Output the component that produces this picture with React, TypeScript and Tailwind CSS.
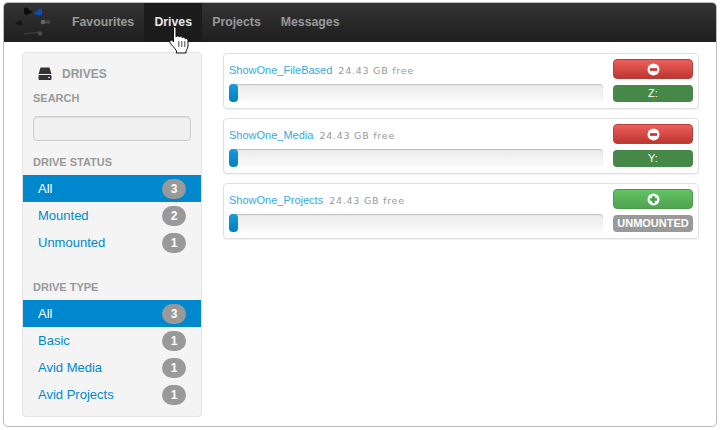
import React from "react";

function Row({ label, count, active }: { label: string; count: number; active?: boolean }) {
  return (
    <div className={`h-[27px] flex items-center justify-between pl-[15px] pr-[15px] text-[13px] ${active ? "bg-[#0088cf] text-white" : "text-[#0088cc]"}`}>
      <span>{label}</span>
      <span className="w-[24px] h-[20px] rounded-[10px] bg-[#999999] text-white text-[12px] font-bold flex items-center justify-center">{count}</span>
    </div>
  );
}

function Heading({ children, className }: { children: React.ReactNode; className: string }) {
  return <div className={`pl-[10px] text-[11px] leading-[14px] font-bold text-[#999999] ${className}`}>{children}</div>;
}

function Circle({ plus }: { plus?: boolean }) {
  const c = plus ? "#43a047" : "#c9302c";
  return (
    <svg width="13" height="13" viewBox="0 0 13 13">
      <circle cx="6.5" cy="6.5" r="6" fill="#fff" />
      <rect x="3" y="5.2" width="7" height="2.6" fill={c} />
      {plus && <rect x="5.2" y="3" width="2.6" height="7" fill={c} />}
    </svg>
  );
}

function Card({ name, free, mounted, letter }: { name: string; free: string; mounted: boolean; letter: string }) {
  return (
    <div className="h-[56px] bg-white border border-[#e0e0e0] rounded-[4px] shadow-[0_1px_1px_rgba(0,0,0,0.06)] flex pl-[5px] pr-[5px]">
      <div className="flex-1 min-w-0 pt-[7px]">
        <div className="h-[18px] flex items-baseline gap-[6px] leading-[18px]">
          <span className="text-[11px] text-[#36a9e1]">{name}</span>
          <span className="text-[9.5px] tracking-[0.75px] text-[#999999] font-['DejaVu_Sans',sans-serif]">{free}</span>
        </div>
        <div className="mt-[5px] h-[18px] w-[374px] rounded-[4px] bg-gradient-to-b from-[#ebebeb] to-[#fafafa] shadow-[inset_0_1px_1px_rgba(0,0,0,0.2)]">
          <div className="h-[18px] w-[9px] rounded-[4px] bg-gradient-to-b from-[#149bdf] to-[#0480be]" />
        </div>
      </div>
      <div className="w-[80px] pt-[5px] shrink-0">
        <div className={`h-[20px] rounded-[4px] flex items-center justify-center border ${mounted ? "bg-gradient-to-b from-[#ee5f5b] to-[#bd362f] border-[#b5403b]" : "bg-gradient-to-b from-[#62c462] to-[#51a351] border-[#4a9a4a]"}`}>
          <Circle plus={!mounted} />
        </div>
        <div className={`mt-[6px] h-[17px] rounded-[4px] flex items-center justify-center text-[11px] text-white ${mounted ? "bg-[#468847]" : "bg-[#999999] font-bold"}`}>{letter}</div>
      </div>
    </div>
  );
}

export default function App() {
  return (
    <div className="relative w-[720px] h-[430px] bg-white overflow-hidden font-['Liberation_Sans',Arial,sans-serif] pt-[2px] pl-[3px] pr-[3px] pb-[3px]">
      <div className="h-[425px] border border-[#bbbbbb] rounded-[5px] overflow-hidden">
        <nav className="h-[39px] bg-gradient-to-b from-[#333333] to-[#1f1f1f] flex pl-[10px] text-[12.3px] font-bold text-[#999999]">
          <svg width="40" height="39" viewBox="0 0 40 39" className="shrink-0 blur-[0.6px]">
            <path d="M10 6 C11 4 14 4 15 7 L19 9 L15 11 C13 13 11 12 10 10 Z" fill="#0c0c0c" />
            <path d="M20 10 L24 8 C24 5 27 5 28 7 L28 12 L22 12 Z" fill="#0a4fb5" />
            <path d="M1 20 L7 17 L9 22 L4 22 Z" fill="#161616" />
            <circle cx="29" cy="19" r="2.3" fill="#666" />
            <rect x="31" y="17.5" width="5" height="3" fill="#4a4a4a" />
            <path d="M10 31 L26 29" stroke="#3a3a3a" strokeWidth="1.3" />
            <circle cx="26" cy="30.5" r="2.3" fill="#4c4c4c" />
          </svg>
          <div className="pl-[18px] pr-[10px] flex items-center">Favourites</div>
          <div className="w-[58px] justify-center flex items-center bg-[#1c1c1c] text-[#e6e6e6]">Drives</div>
          <div className="pl-[10px] pr-[10px] flex items-center">Projects</div>
          <div className="pl-[10px] flex items-center">Messages</div>
        </nav>
        <div className="flex pl-[18px] pt-[10px]">
          <aside className="w-[180px] h-[365px] shrink-0 bg-[#f4f4f4] border border-[#e3e3e3] rounded-[4px]">
            <div className="h-[25px] mt-[8px] flex items-center pl-[15px] gap-[10px] text-[12px] font-bold text-[#999999]">
              <svg width="14" height="13" viewBox="0 0 14 13">
                <path d="M2.5 0.5 H11.5 L13.5 7 H0.5 Z" fill="#333" />
                <rect x="0.5" y="8" width="13" height="5" rx="1" fill="#333" />
                <rect x="10" y="10" width="2" height="1" fill="#ddd" />
              </svg>
              <span>DRIVES</span>
            </div>
            <Heading className="mt-[5px]">SEARCH</Heading>
            <div className="mx-[10px] mt-[11px] h-[25px] rounded-[4px] border border-[#cccccc] bg-[#f0f0f0] shadow-[inset_0_1px_1px_rgba(0,0,0,0.08)]" />
            <Heading className="mt-[14px] mb-[6px]">DRIVE STATUS</Heading>
            <Row label="All" count={3} active />
            <Row label="Mounted" count={2} />
            <Row label="Unmounted" count={1} />
            <Heading className="mt-[24px] mb-[6px]">DRIVE TYPE</Heading>
            <Row label="All" count={3} active />
            <Row label="Basic" count={1} />
            <Row label="Avid Media" count={1} />
            <Row label="Avid Projects" count={1} />
          </aside>
          <main className="w-[476px] ml-[21px] flex flex-col gap-[9px] pt-[1px]">
            <Card name="ShowOne_FileBased" free="24.43 GB free" mounted letter="Z:" />
            <Card name="ShowOne_Media" free="24.43 GB free" mounted letter="Y:" />
            <Card name="ShowOne_Projects" free="24.43 GB free" mounted={false} letter="UNMOUNTED" />
          </main>
        </div>
      </div>
      <svg width="22" height="28" viewBox="0 0 22 28" className="absolute left-[169px] top-[26px]">
        <path d="M4.5 2 C4.5 .6 7 .6 7 2 V11 C7.5 9.5 10 9.5 10.2 11 C10.8 9.8 13 10 13.2 11.6 C14 10.6 16.2 11 16.2 12.8 C17 12.2 19 12.6 19 14.5 V19 C19 22 18 23 17 25 V27 H7.5 V25 C6 22 2.5 19.5 1 16.5 C.4 15 2 13.5 3.5 14.6 L4.5 16 Z" fill="#fff" stroke="#111" strokeWidth="1" strokeLinejoin="round" />
        <path d="M9.8 15 V21 M12.8 15 V21 M15.8 15 V21" stroke="#333" strokeWidth="0.9" />
      </svg>
    </div>
  );
}
